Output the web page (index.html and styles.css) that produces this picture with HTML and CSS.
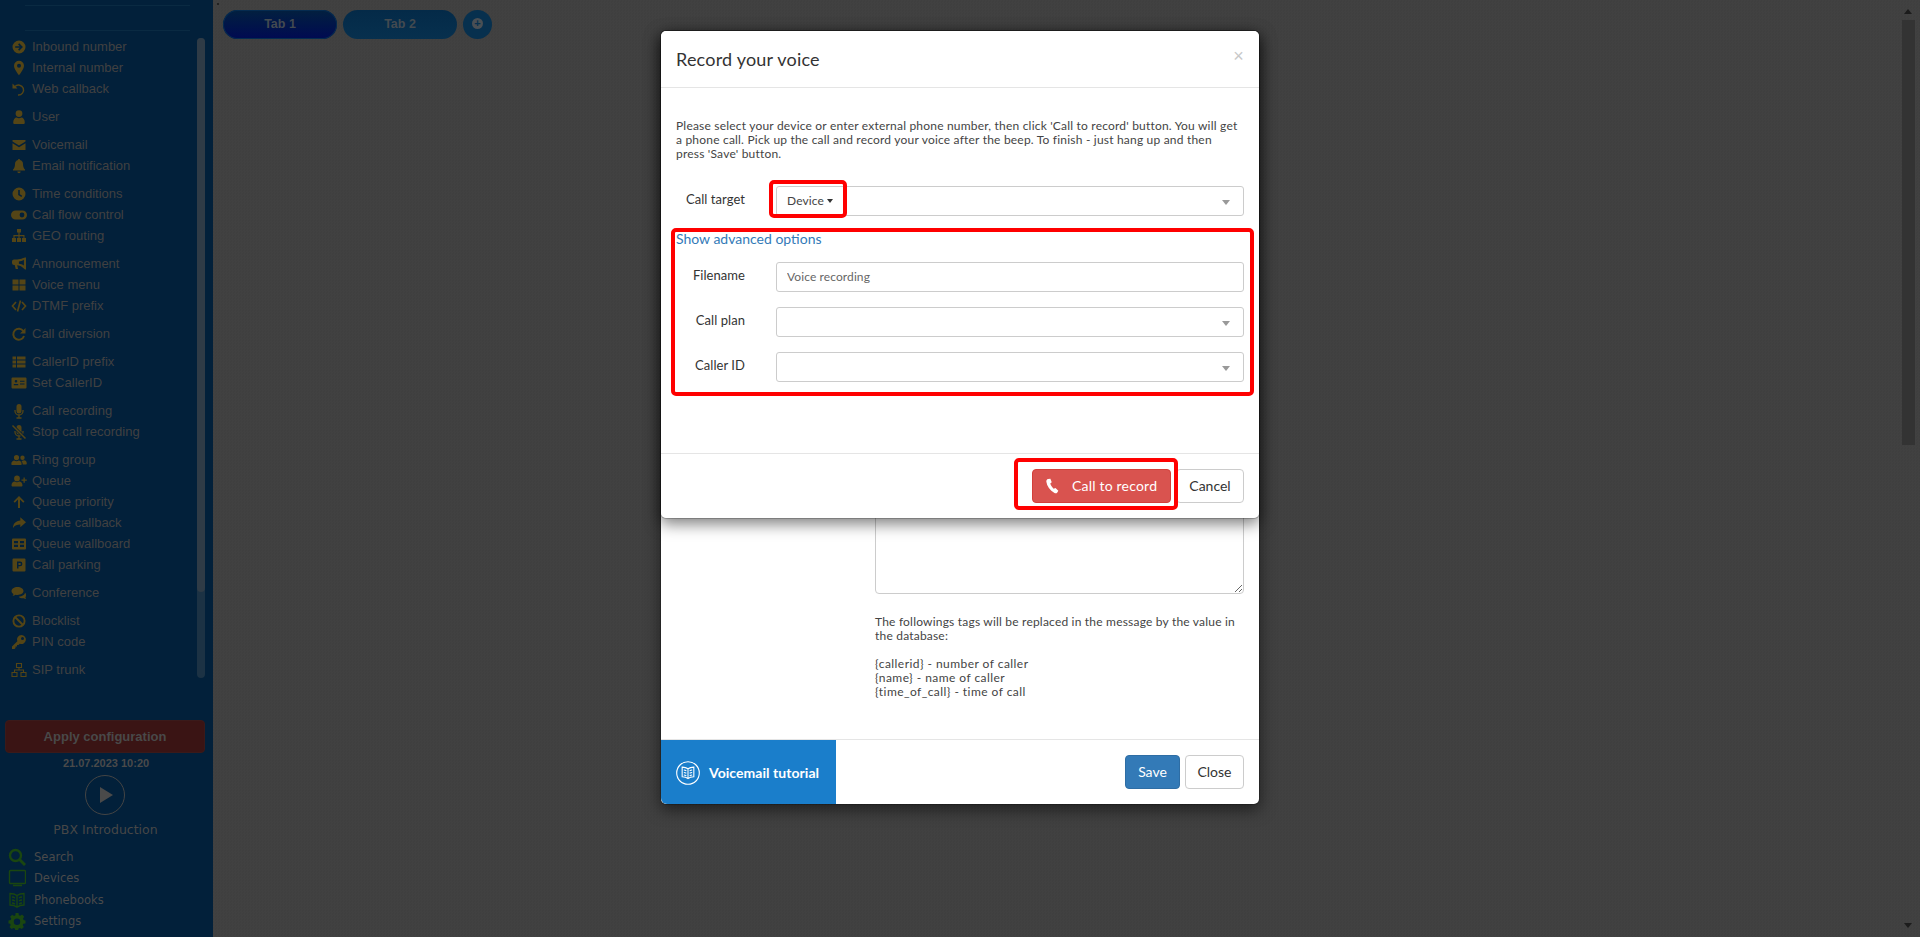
FILE: index.html
```html
<!DOCTYPE html>
<html lang="en">
<head>
<meta charset="utf-8">
<title>Record your voice</title>
<link rel="stylesheet" href="styles.css">
</head>
<body>
<svg class="sprite" xmlns="http://www.w3.org/2000/svg">
  <symbol id="i-inbound" viewBox="0 0 16 16"><path fill-rule="evenodd" d="M8 1.500a6.500 6.500 0 1 0 0 13a6.500 6.500 0 0 0 0-13z M8.200 4.300l3.700 3.700-3.700 3.700-1.100-1.100 1.700-1.800H4.200V7.200h4.600L7.100 5.400z"/></symbol>
  <symbol id="i-marker" viewBox="0 0 16 16"><path fill-rule="evenodd" d="M8 .8a5 5 0 0 0-5 5c0 3.500 5 9.600 5 9.600s5-6.100 5-9.600a5 5 0 0 0-5-5z M8 3.800a2 2 0 1 1 0 4a2 2 0 0 1 0-4z"/></symbol>
  <symbol id="i-undo" viewBox="0 0 16 16"><path d="M1.500 2.500v5h5z"/><path d="M4 5.500a5 5 0 1 1 3 8.500" fill="none" stroke="currentColor" stroke-width="1.500"/></symbol>
  <symbol id="i-user" viewBox="0 0 16 16"><path d="M8 1.200a3.400 3.400 0 1 1 0 6.800a3.400 3.400 0 0 1 0-6.800z M2.200 13.500c0-3 1.500-5 3.500-5 .7.500 1.400.8 2.300.8s1.600-.3 2.300-.8c2 0 3.500 2 3.500 5 0 1-.6 1.500-1.500 1.500h-8.600c-.9 0-1.500-.5-1.500-1.500z"/></symbol>
  <symbol id="i-mail" viewBox="0 0 16 16"><path d="M1.500 3h13v1.600L8 8.600 1.500 4.600z M1.500 6.300 8 10.300l6.500-4V13h-13z"/></symbol>
  <symbol id="i-bell" viewBox="0 0 16 16"><path d="M8 1c.6 0 1 .4 1 1 2 .5 3 2 3 4 0 3 1 4.500 2 5.500v1H2v-1c1-1 2-2.500 2-5.500 0-2 1-3.500 3-4 0-.6.4-1 1-1z M6.300 13.500h3.400a1.700 1.700 0 0 1-3.400 0z"/></symbol>
  <symbol id="i-clock" viewBox="0 0 16 16"><path fill-rule="evenodd" d="M8 1.500a6.500 6.500 0 1 0 0 13a6.500 6.500 0 0 0 0-13z M7.200 4h1.600v4.200l2.400 1.500-.8 1.300-3.200-2z"/></symbol>
  <symbol id="i-toggle" viewBox="0 0 16 16"><path fill-rule="evenodd" d="M4.500 3.500h7a4.500 4.500 0 0 1 0 9h-7a4.500 4.500 0 0 1 0-9z M11 5.600a2.400 2.400 0 1 0 0 4.800a2.400 2.400 0 0 0 0-4.800z"/></symbol>
  <symbol id="i-sitemap" viewBox="0 0 16 16"><path d="M6 1h4v3.500H8.600V7h4.900v3H15v4h-4v-4h1.400V8.200H8.600V10H10v4H6v-4h1.400V8.200H3.600V10H5v4H1v-4h1.400V7h5V4.500H6z"/></symbol>
  <symbol id="i-horn" viewBox="0 0 16 16"><path fill-rule="evenodd" d="M14 1.500h1v12h-1l-3-2.400C9.500 10 8 9.500 6.200 9.300l.9 3.700H4.700L3.700 9H3A2 2 0 0 1 1 7V5.500a2 2 0 0 1 2-2h3c2 0 4.500-.7 5.500-1.200z M12.900 3.800c-1.500 1-3.200 1.500-5 1.700v2.300c1.800.2 3.500.7 5 1.700z"/></symbol>
  <symbol id="i-grid" viewBox="0 0 16 16"><path d="M1.500 2.500h6v5h-6z M8.500 2.500h6v5h-6z M1.500 8.500h6v5h-6z M8.500 8.500h6v5h-6z"/></symbol>
  <symbol id="i-code" viewBox="0 0 16 16"><path d="M5 4 1.500 8 5 12 M11 4l3.500 4L11 12 M9.500 2.500 6.500 13.500" fill="none" stroke="currentColor" stroke-width="1.700"/></symbol>
  <symbol id="i-redo" viewBox="0 0 16 16"><path d="M14.500 2v5.500H9z"/><path d="M12.400 5.200A5.500 5.500 0 1 0 13 10" fill="none" stroke="currentColor" stroke-width="2"/></symbol>
  <symbol id="i-rows" viewBox="0 0 16 16"><path d="M1.500 2.500h3.500v3H1.500z M6 2.500h8.500v3H6z M1.500 6.500h3.500v3H1.500z M6 6.500h8.500v3H6z M1.500 10.500h3.500v3H1.500z M6 10.500h8.500v3H6z"/></symbol>
  <symbol id="i-idcard" viewBox="0 0 16 16"><path fill-rule="evenodd" d="M1.500 2.500h13a1 1 0 0 1 1 1v9a1 1 0 0 1-1 1h-13a1 1 0 0 1-1-1v-9a1 1 0 0 1 1-1z M5 5a1.300 1.300 0 1 0 0 2.600A1.300 1.300 0 0 0 5 5z M2.800 9v1.300h4.400V9z M9 5.700v1.100h4.500V5.700z M9 8.500v1.100h4.500V8.500z"/></symbol>
  <symbol id="i-mic" viewBox="0 0 16 16"><path d="M8 1a2.500 2.500 0 0 1 2.500 2.500v4.500a2.500 2.500 0 0 1-5 0V3.500A2.500 2.500 0 0 1 8 1z"/><path d="M4 7v1a4 4 0 0 0 8 0V7 M8 12v3 M5.500 15h5" fill="none" stroke="currentColor" stroke-width="1.300"/></symbol>
  <symbol id="i-micoff" viewBox="0 0 16 16"><path d="M8 1a2.500 2.500 0 0 1 2.500 2.500v4.500a2.500 2.500 0 0 1-5 0V3.500A2.500 2.500 0 0 1 8 1z"/><path d="M4 7v1a4 4 0 0 0 8 0V7 M8 12v3 M5.500 15h5" fill="none" stroke="currentColor" stroke-width="1.300"/><path d="M1.500 1.500l13 13" stroke="#02203a" stroke-width="3"/><path d="M1.500 1.500l13 13" stroke="currentColor" stroke-width="1.500"/></symbol>
  <symbol id="i-users" viewBox="0 0 16 16"><path d="M5.500 3a2.600 2.600 0 1 1 0 5.200a2.600 2.600 0 0 1 0-5.200z M11.500 3.500a2.200 2.200 0 1 1 0 4.400a2.200 2.200 0 0 1 0-4.400z M.3 12c0-2.200 1.500-3.400 3-3.400.6.400 1.300.6 2.200.6s1.600-.2 2.200-.6c1.500 0 3 1.200 3 3.400 0 .7-.5 1-1 1h-8.400c-.5 0-1-.3-1-1z M11.400 8.700c.6 0 1.100-.1 1.600-.4 1.500 0 2.800 1.200 2.800 3.200 0 .6-.4 1-1 1h-3.100c0-1.500-.5-2.800-1.300-3.600z"/></symbol>
  <symbol id="i-userplus" viewBox="0 0 16 16"><path d="M6 2.500a2.900 2.900 0 1 1 0 5.800a2.900 2.900 0 0 1 0-5.800z M.5 12.300c0-2.400 1.600-3.800 3.200-3.800.7.400 1.400.7 2.300.7s1.600-.3 2.300-.7c1.600 0 3.200 1.400 3.200 3.800 0 .8-.5 1.200-1.100 1.200H1.600c-.6 0-1.100-.4-1.100-1.200z M12.500 4.500h1.300v2h2v1.300h-2v2h-1.300v-2h-2V6.500h2z"/></symbol>
  <symbol id="i-up" viewBox="0 0 16 16"><path d="M8 2l5.500 5.500-1.300 1.300-3.200-3.200V14H7V5.600L3.800 8.800 2.500 7.500z"/></symbol>
  <symbol id="i-share" viewBox="0 0 16 16"><path d="M9.300 2.300l5.700 5-5.700 5V9.500c-3.200 0-5.500.6-7.300 3.500 0-4.500 2.800-7 7.300-7.500z"/></symbol>
  <symbol id="i-board" viewBox="0 0 16 16"><path fill-rule="evenodd" d="M2 2.500h12a1 1 0 0 1 1 1v9a1 1 0 0 1-1 1H2a1 1 0 0 1-1-1v-9a1 1 0 0 1 1-1z M3 5v2.300h4V5z M9 5v2.300h4V5z M3 8.700V11h4V8.700z M9 8.700V11h4V8.700z"/></symbol>
  <symbol id="i-park" viewBox="0 0 16 16"><path fill-rule="evenodd" d="M2.500 1.500h11a1 1 0 0 1 1 1v11a1 1 0 0 1-1 1h-11a1 1 0 0 1-1-1v-11a1 1 0 0 1 1-1z M6 4.500v7h1.500V9.300h1.500a2.400 2.400 0 0 0 0-4.800z M7.500 5.900h1.400a1 1 0 0 1 0 2H7.500z"/></symbol>
  <symbol id="i-chat" viewBox="0 0 16 16"><path d="M6.500 2C3 2 .5 3.800.5 6c0 1.200.8 2.300 2 3-.2.700-.6 1.300-1 1.800 1 0 2.200-.5 3-1.100.6.100 1.300.2 2 .2 3.500 0 6-1.800 6-3.900S10 2 6.500 2z M13.900 6.500c.1.300.1.500.1.800 0 2.600-2.700 4.200-6.300 4.400.9 1 2.400 1.600 4.100 1.600l.9-.1c.7.500 1.500.8 2.500.8-.4-.4-.7-.9-.8-1.500.4-.5.6-1.600.6-2.500 0-1.200-.4-2.100-1.100-2.500z"/></symbol>
  <symbol id="i-ban" viewBox="0 0 16 16"><circle cx="8" cy="8" r="5.600" fill="none" stroke="currentColor" stroke-width="1.900"/><path d="M4 4l8 8" stroke="currentColor" stroke-width="1.900"/></symbol>
  <symbol id="i-key" viewBox="0 0 16 16"><path fill-rule="evenodd" d="M10.500 1a4.500 4.500 0 1 1-1.700 8.700L7.500 11H6v1.500H4.500V14L3.500 15H1v-2.500l5.300-5.300A4.500 4.500 0 0 1 10.500 1z M11.500 3a1.500 1.500 0 1 0 0 3a1.500 1.500 0 0 0 0-3z"/></symbol>
  <symbol id="i-net" viewBox="0 0 16 16"><path d="M5.500 1.500h5v4h-5z M1 10.500h5v4H1z M10 10.500h5v4h-5z M8 5.500V8 M3.500 10.500V8h9v2.500" fill="none" stroke="currentColor" stroke-width="1.100"/></symbol>
  <symbol id="i-search" viewBox="0 0 18 18"><circle cx="7.500" cy="7.500" r="5.500" fill="none" stroke="currentColor" stroke-width="2.400"/><path d="M11.500 11.500l5.500 5.500" stroke="currentColor" stroke-width="2.800"/></symbol>
  <symbol id="i-screen" viewBox="0 0 18 18"><path d="M2.500 1.500h14a1 1 0 0 1 1 1v11a1 1 0 0 1-1 1h-14a1 1 0 0 1-1-1v-11a1 1 0 0 1 1-1z M5 16.500h9" fill="none" stroke="currentColor" stroke-width="1.400"/></symbol>
  <symbol id="i-book" viewBox="0 0 18 18"><path d="M9 4.500C7 3 4.500 2.500 2 2.500V14c2.500 0 5 .5 7 2.200 2-1.700 4.500-2.200 7-2.200V2.500c-2.500 0-5 .5-7 2z M9 4.500v11.500 M4 6c1 .1 2 .4 3 1 M4 9c1 .1 2 .4 3 1 M4 12c1 .1 2 .4 3 1 M14 6c-1 .1-2 .4-3 1 M14 9c-1 .1-2 .4-3 1 M14 12c-1 .1-2 .4-3 1" fill="none" stroke="currentColor" stroke-width="1.300"/></symbol>
  <symbol id="i-gear" viewBox="0 0 18 18"><path fill-rule="evenodd" d="M7.500 1h3l.4 2.200 1.300.6 1.900-1.200 2.100 2.100-1.200 1.900.6 1.300L17.500 8.400v3l-2.200.4-.6 1.300 1.200 1.900-2.100 2.100-1.900-1.200-1.300.6-.4 1.500h-3l-.4-1.500-1.300-.6-1.900 1.200-2.100-2.100 1.200-1.900-.6-1.300L.5 11.400v-3l2.200-.4.6-1.300-1.200-1.900 2.100-2.100 1.900 1.200 1.300-.6z M9 6.500a3.200 3.200 0 1 0 0 6.400a3.200 3.200 0 0 0 0-6.400z"/></symbol>
  <symbol id="i-phone" viewBox="0 0 16 16"><path d="M3.800 1 6 .6l1.300 3.300-1.400 1.300c.5 1.800 1.700 3.600 3.200 4.900l1.700-.8 2.700 2.600-1 1.700c-.5.800-1.700 1.100-2.600.6C5.500 11.400 2.800 8 2.200 3.500c-.1-1.200.5-2.200 1.600-2.500z"/></symbol>
</svg>

<aside class="sidebar">
  <hr class="side-rule first">
  <hr class="side-rule">
  <nav class="side-nav">
    <ul class="group">
      <li class="item"><svg class="ico"><use href="#i-inbound"/></svg>Inbound number</li>
      <li class="item"><svg class="ico"><use href="#i-marker"/></svg>Internal number</li>
      <li class="item"><svg class="ico"><use href="#i-undo"/></svg>Web callback</li>
    </ul>
    <ul class="group">
      <li class="item"><svg class="ico"><use href="#i-user"/></svg>User</li>
    </ul>
    <ul class="group">
      <li class="item"><svg class="ico"><use href="#i-mail"/></svg>Voicemail</li>
      <li class="item"><svg class="ico"><use href="#i-bell"/></svg>Email notification</li>
    </ul>
    <ul class="group">
      <li class="item"><svg class="ico"><use href="#i-clock"/></svg>Time conditions</li>
      <li class="item"><svg class="ico"><use href="#i-toggle"/></svg>Call flow control</li>
      <li class="item"><svg class="ico"><use href="#i-sitemap"/></svg>GEO routing</li>
    </ul>
    <ul class="group">
      <li class="item"><svg class="ico"><use href="#i-horn"/></svg>Announcement</li>
      <li class="item"><svg class="ico"><use href="#i-grid"/></svg>Voice menu</li>
      <li class="item"><svg class="ico"><use href="#i-code"/></svg>DTMF prefix</li>
    </ul>
    <ul class="group">
      <li class="item"><svg class="ico"><use href="#i-redo"/></svg>Call diversion</li>
    </ul>
    <ul class="group">
      <li class="item"><svg class="ico"><use href="#i-rows"/></svg>CallerID prefix</li>
      <li class="item"><svg class="ico"><use href="#i-idcard"/></svg>Set CallerID</li>
    </ul>
    <ul class="group">
      <li class="item"><svg class="ico"><use href="#i-mic"/></svg>Call recording</li>
      <li class="item"><svg class="ico"><use href="#i-micoff"/></svg>Stop call recording</li>
    </ul>
    <ul class="group">
      <li class="item"><svg class="ico"><use href="#i-users"/></svg>Ring group</li>
      <li class="item"><svg class="ico"><use href="#i-userplus"/></svg>Queue</li>
      <li class="item"><svg class="ico"><use href="#i-up"/></svg>Queue priority</li>
      <li class="item"><svg class="ico"><use href="#i-share"/></svg>Queue callback</li>
      <li class="item"><svg class="ico"><use href="#i-board"/></svg>Queue wallboard</li>
      <li class="item"><svg class="ico"><use href="#i-park"/></svg>Call parking</li>
    </ul>
    <ul class="group">
      <li class="item"><svg class="ico"><use href="#i-chat"/></svg>Conference</li>
    </ul>
    <ul class="group">
      <li class="item"><svg class="ico"><use href="#i-ban"/></svg>Blocklist</li>
      <li class="item"><svg class="ico"><use href="#i-key"/></svg>PIN code</li>
    </ul>
    <ul class="group">
      <li class="item"><svg class="ico"><use href="#i-net"/></svg>SIP trunk</li>
    </ul>
    <div class="side-scroll"><div class="side-thumb"></div></div>
  </nav>
  <button class="apply" type="button">Apply configuration</button>
  <div class="stamp">21.07.2023 10:20</div>
  <div class="play"><span class="play-tri"></span></div>
  <div class="intro">PBX Introduction</div>
  <ul class="tools">
    <li class="tool"><svg class="tool-ico"><use href="#i-search"/></svg>Search</li>
    <li class="tool"><svg class="tool-ico"><use href="#i-screen"/></svg>Devices</li>
    <li class="tool"><svg class="tool-ico"><use href="#i-book"/></svg>Phonebooks</li>
    <li class="tool"><svg class="tool-ico"><use href="#i-gear"/></svg>Settings</li>
  </ul>
</aside>

<main class="page">
  <span class="speck"></span>
  <div class="tabs">
    <div class="tab active">Tab 1</div>
    <div class="tab">Tab 2</div>
    <div class="tab-add"><span class="tab-plus">+</span></div>
  </div>
</main>

<div class="pagebar">
  <span class="arrow-up"></span>
  <div class="pagebar-thumb"></div>
  <span class="arrow-down"></span>
</div>

<section class="modal back-modal">
  <div class="back-body">
    <textarea class="area" readonly></textarea>
    <p class="hint">The followings tags will be replaced in the message by the value in the database:</p>
    <p class="hint tags">{callerid} - number of caller<br>{name} - name of caller<br>{time_of_call} - time of call</p>
  </div>
  <footer class="back-foot">
    <a class="tutorial">
      <svg class="tut-ico" viewBox="0 0 24 24"><circle cx="12" cy="12" r="11.300" fill="none" stroke="currentColor" stroke-width="1.100"/><use href="#i-book" x="4.500" y="4" width="15" height="15"/></svg>
      Voicemail tutorial
    </a>
    <div class="foot-btns">
      <button class="btn primary" type="button">Save</button>
      <button class="btn close-btn" type="button">Close</button>
    </div>
  </footer>
</section>

<section class="modal front-modal">
  <header class="head">
    <h4 class="title">Record your voice</h4>
    <span class="close">×</span>
  </header>
  <div class="body">
    <p class="lead">Please select your device or enter external phone number, then click 'Call to record' button. You will get a phone call. Pick up the call and record your voice after the beep. To finish - just hang up and then<br>press 'Save' button.</p>
    <div class="row target">
      <label class="label">Call target</label>
      <div class="field"><span class="device">Device<span class="caret dark"></span></span><span class="caret"></span></div>
    </div>
    <a class="advanced">Show advanced options</a>
    <div class="row">
      <label class="label">Filename</label>
      <input class="field text" value="Voice recording">
    </div>
    <div class="row">
      <label class="label">Call plan</label>
      <div class="field"><span class="caret"></span></div>
    </div>
    <div class="row">
      <label class="label">Caller ID</label>
      <div class="field"><span class="caret"></span></div>
    </div>
  </div>
  <footer class="foot">
    <button class="btn danger" type="button"><svg class="phone"><use href="#i-phone"/></svg>Call to record</button>
    <button class="btn cancel" type="button">Cancel</button>
  </footer>
  <div class="mark mark-device"></div>
  <div class="mark mark-advanced"></div>
  <div class="mark mark-call"></div>
</section>
</body>
</html>
```

FILE: styles.css
```css
* { box-sizing: border-box; }
html, body { margin: 0; height: 937px; overflow: hidden; }
body {
  display: flex;
  background-color: #404040;
  background-image: repeating-conic-gradient(#414141 0 25%, #3f3f3f 0 50%);
  background-size: 3px 3px;
  font-family: "Liberation Sans", Arial, sans-serif;
}
.sprite { display: none; }
ul { list-style: none; margin: 0; padding: 0; }

/* sidebar */
.sidebar {
  width: 213px;
  height: 937px;
  flex: none;
  display: flex;
  flex-direction: column;
  background: #02203a;
  color: #414141;
}
.side-rule { width: 165px; height: 1px; margin: 24px 0 0 25px; border: 0; background: #0a2a42; }
.side-rule.first { margin-top: 5px; }
.side-nav { position: relative; height: 644px; margin-top: 5px; flex: none; }
.group { margin-bottom: 7px; }
.item { display: flex; align-items: center; height: 21px; padding-left: 11px; font-size: 13px; white-space: nowrap; }
.ico { width: 16px; height: 16px; margin-right: 5px; flex: none; color: #544516; fill: currentColor; }
.side-scroll { position: absolute; left: 197px; top: 2px; width: 8px; height: 640px; border-radius: 4px; background: #1c3244; }
.side-thumb { height: 554px; border-radius: 4px; background: #2f3b46; }
.apply {
  width: 200px; height: 33px; margin: 40px 0 0 5px; flex: none;
  border: 1px solid #3a1a1a; border-radius: 4px; background: #3a1414;
  color: #494949; font: bold 13px "Liberation Sans", Arial, sans-serif;
}
.stamp { margin-top: 2px; height: 16px; padding-right: 1px; text-align: center; font-size: 11px; line-height: 16px; font-weight: bold; color: #4a4a4a; }
.play { display: flex; align-items: center; justify-content: center; width: 40px; height: 40px; margin: 4px 0 0 85px; flex: none; border: 1px solid #444; border-radius: 50%; }
.play-tri { margin-left: 2px; border-left: 13px solid #4a4a4a; border-top: 8px solid transparent; border-bottom: 8px solid transparent; }
.intro { margin-top: 6px; height: 18px; padding-right: 2px; text-align: center; font: 12.500px/18px "DejaVu Sans", sans-serif; color: #474747; }
.tools { margin-top: 7px; }
.tool { display: flex; align-items: center; height: 21.500px; padding-left: 8px; font: 11.500px "DejaVu Sans", sans-serif; color: #4a4a4a; }
.tool-ico { width: 18px; height: 18px; margin-right: 8px; color: #1a4610; fill: currentColor; }

/* page */
.page { position: relative; flex: 1; min-width: 0; padding: 10px 0 0 10px; }
.speck { position: absolute; left: 4px; top: 3px; width: 2px; height: 2px; background: #222; }
.tabs { display: flex; gap: 6px; }
.tab {
  width: 114px; height: 29px; border-radius: 15px;
  background: linear-gradient(#042a48, #07304e);
  color: #434a50; font-size: 12.500px; font-weight: bold; line-height: 29px; text-align: center;
}
.tab.active { background: linear-gradient(#02203f, #000a52); box-shadow: inset 0 0 0 1px #052b50; }
.tab-add { display: flex; align-items: center; justify-content: center; width: 29px; height: 29px; border-radius: 50%; background: #07304e; }
.tab-plus { display: block; width: 11px; height: 11px; margin-bottom: 3px; border-radius: 50%; background: #4a4f54; color: #07304e; font: bold 11px/11px "Liberation Sans", sans-serif; text-align: center; }
.pagebar { position: relative; width: 18px; flex: none; padding-top: 20px; }
.pagebar-thumb { width: 13px; height: 425px; background: #333; }
.arrow-up, .arrow-down { position: absolute; left: 2px; width: 0; height: 0; border-left: 4px solid transparent; border-right: 4px solid transparent; }
.arrow-up { top: 9px; border-bottom: 5px solid #1c1c1c; }
.arrow-down { top: 923px; border-top: 5px solid #1c1c1c; }

/* modals */
.modal {
  position: absolute; left: 660px; top: 30px; width: 600px;
  display: flex; flex-direction: column;
  background: #fff; background-clip: padding-box;
  border: 1px solid rgba(0,0,0,.2); border-radius: 6px;
  box-shadow: 0 5px 15px rgba(0,0,0,.5);
  font: 12px/14px "Lato", sans-serif; letter-spacing: .2px; color: #333;
}
.back-modal { height: 775px; }
.front-modal { height: 489px; }
.back-body { flex: 1; display: flex; flex-direction: column; justify-content: flex-end; padding: 0 15px 40px 214px; color: #444; }
.area { width: 369px; height: 180px; margin-bottom: 21px; border: 1px solid #ccc; border-radius: 4px; outline: 0; background: #fff; }
.hint { margin: 0 0 14px; }
.tags { margin: 0; letter-spacing: .45px; }
.back-foot { display: flex; justify-content: space-between; height: 65px; border-top: 1px solid #e5e5e5; }
.tutorial { display: flex; align-items: center; gap: 9px; width: 175px; height: 64px; padding: 2px 0 0 15px; border-radius: 0 0 0 6px; background: #1a7ecb; color: #fff; font-size: 14px; font-weight: bold; letter-spacing: .05px; white-space: nowrap; }
.tut-ico { width: 24px; height: 24px; flex: none; color: #fff; }
.foot-btns { display: flex; gap: 5px; padding: 15px 15px 0 0; }
.btn { height: 34px; padding: 0; border: 1px solid #ccc; border-radius: 4px; background: #fff; color: #333; font: 14px/20px "Lato", sans-serif; white-space: nowrap; }
.btn.primary { width: 55px; border-color: #2e6da4; background: #337ab7; color: #fff; }
.close-btn { width: 59px; }
.cancel { width: 68px; }
.btn.danger { display: inline-flex; align-items: center; width: 139px; padding-left: 11px; border-color: #d43f3a; background: #d9534f; color: #fff; letter-spacing: .2px; }
.phone { width: 17px; height: 17px; margin-right: 11px; flex: none; color: #fff; fill: currentColor; }
.head { position: relative; display: flex; align-items: center; height: 57px; padding: 0 15px 1px; border-bottom: 1px solid #e5e5e5; flex: none; }
.title { margin: 0; font: normal 18px/20px "Lato", sans-serif; color: #333; }
.close { position: absolute; right: 15px; top: 15px; color: #c8c8c8; font: 18px/20px "Liberation Sans", sans-serif; }
.body { flex: 1; padding: 31px 15px 0; }
.lead { margin: 0 0 25px; color: #444; }
.row { display: grid; grid-template-columns: 69px 468px; column-gap: 31px; align-items: start; margin-bottom: 15px; }
.row.target { margin-bottom: 14px; }
.label { padding-top: 6px; text-align: right; white-space: nowrap; color: #333; font-size: 13px; letter-spacing: .05px; }
.field { position: relative; display: flex; align-items: center; width: 468px; height: 30px; padding: 0 10px; border: 1px solid #ccc; border-radius: 3px; background: #fff; color: #555; font: 12px/14px "Lato", sans-serif; letter-spacing: .1px; outline: 0; }
.text { padding-bottom: 2px; color: #666; }
.device { display: inline-flex; align-items: center; color: #444; }
.caret { position: absolute; right: 13px; top: 13px; border-left: 4.500px solid transparent; border-right: 4.500px solid transparent; border-top: 5px solid #999; }
.caret.dark { position: static; margin-left: 3px; border-left-width: 3.500px; border-right-width: 3.500px; border-top: 4px solid #333; }
.advanced { display: block; height: 18px; margin-bottom: 14px; color: #337ab7; font-size: 14px; line-height: 18px; letter-spacing: 0; }
.foot { display: flex; justify-content: flex-end; gap: 5px; height: 65px; padding: 15px 15px 0 0; border-top: 1px solid #e5e5e5; flex: none; }
.mark { position: absolute; border: 4px solid #f00; border-radius: 5px; }
.mark-device { left: 108px; top: 149px; width: 78px; height: 38px; }
.mark-advanced { left: 10px; top: 197px; width: 583px; height: 168px; }
.mark-call { left: 353px; top: 427px; width: 164px; height: 52px; }
```
